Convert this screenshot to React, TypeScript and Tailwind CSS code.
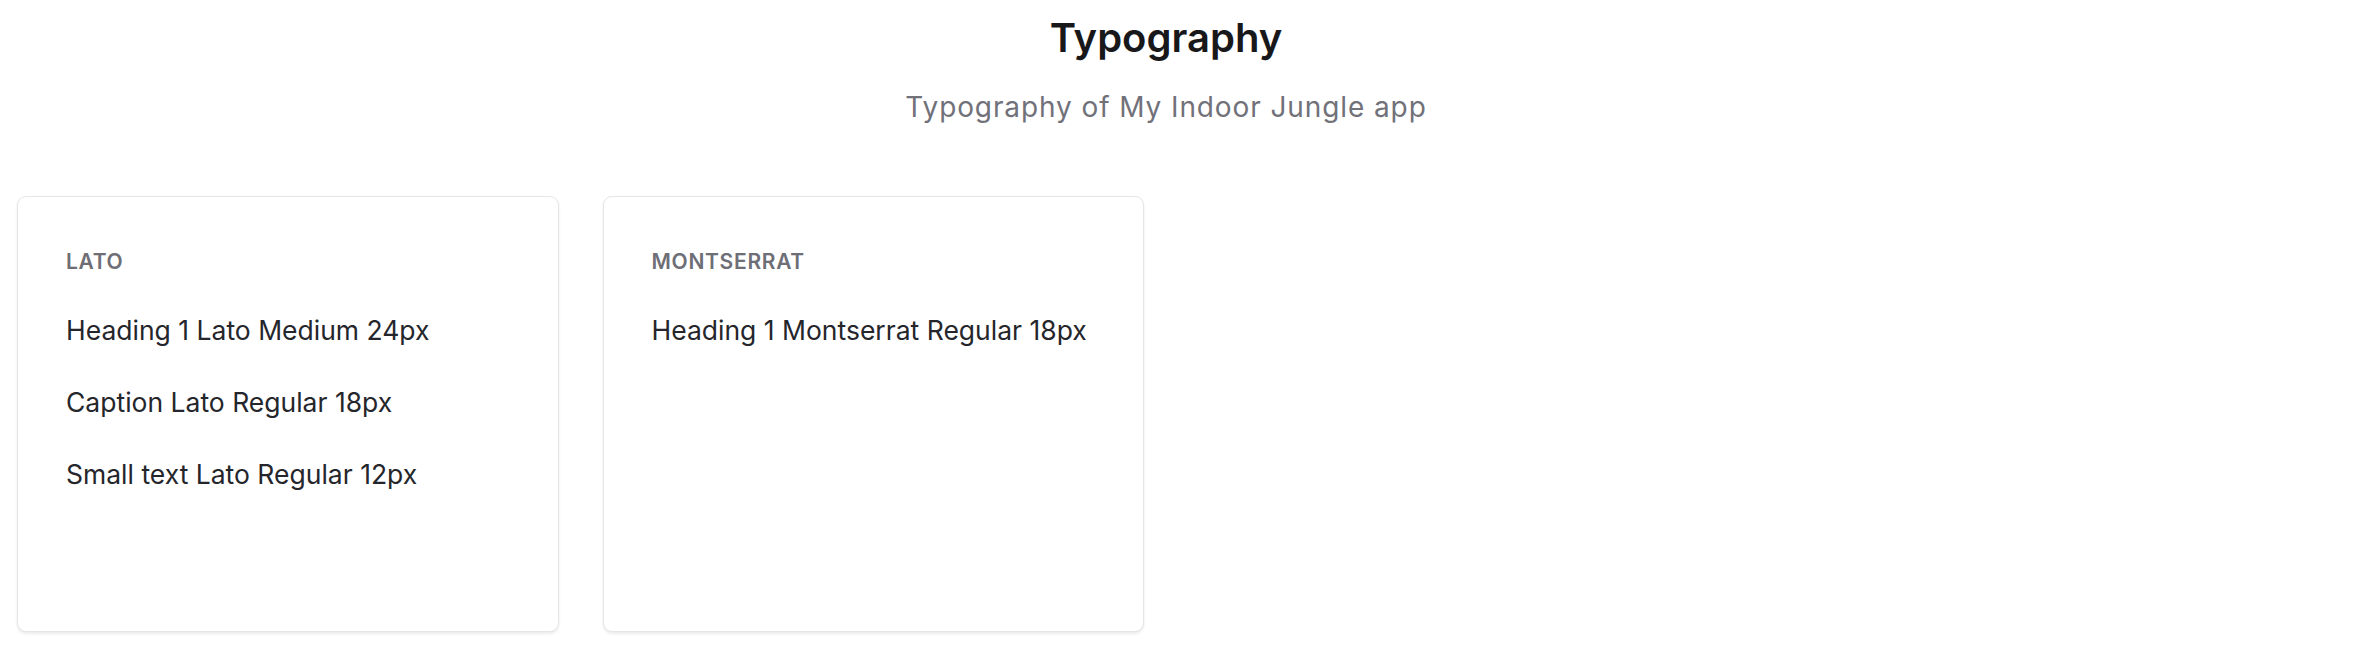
import React from "react";

const font = { fontFamily: "Inter, 'Noto Sans', sans-serif" };

function Card({ label, items }: { label: string; items: string[] }) {
  return (
    <div className="h-[436px] rounded-[9px] border border-[#e6e6e8] bg-white px-[48px] pt-[49px] shadow-[0_2px_3px_rgba(0,0,0,0.08)]">
      <div className="text-[21px] font-semibold leading-[32px] tracking-[0.7px] text-[#6e6e76]">{label}</div>
      <div className="mt-[32px] flex flex-col gap-[32px]">
        {items.map((t) => (
          <div key={t} className="text-[26.5px] font-normal leading-[40px] text-[#25262b]">
            {t}
          </div>
        ))}
      </div>
    </div>
  );
}

export default function App() {
  return (
    <div className="min-h-[662px] bg-white pl-[17px] pr-[51px]" style={font}>
      <div className="flex flex-col items-center pt-[8px]">
        <h1 className="text-[40px] font-semibold leading-[60px] text-[#18181b]">Typography</h1>
        <p className="mt-[19px] text-[28px] leading-[40px] tracking-[0.9px] text-[#71717a]">Typography of My Indoor Jungle app</p>
      </div>
      <div className="mt-[69px] grid grid-cols-4 gap-[44px]">
        <Card
          label="LATO"
          items={["Heading 1 Lato Medium 24px", "Caption Lato Regular 18px", "Small text Lato Regular 12px"]}
        />
        <Card label="MONTSERRAT" items={["Heading 1 Montserrat Regular 18px"]} />
      </div>
    </div>
  );
}
